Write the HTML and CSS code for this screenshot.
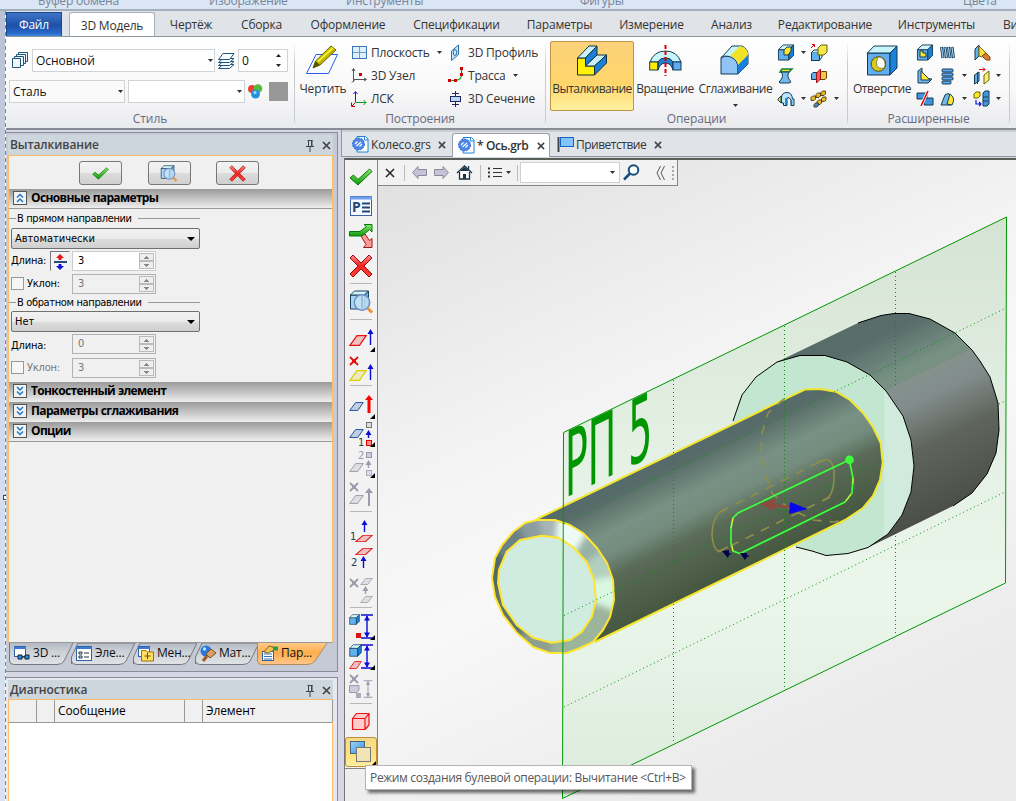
FILE: index.html
```html
<!DOCTYPE html>
<html lang="ru">
<head>
<meta charset="utf-8">
<title>CAD</title>
<link rel="stylesheet" href="styles.css">
</head>
<body>
<svg class="defs" width="0" height="0">
<defs>
<linearGradient id="gGreen" x1="0" y1="0" x2="0" y2="1"><stop offset="0" stop-color="#8bea6c"/><stop offset="1" stop-color="#0b9a0b"/></linearGradient>
<linearGradient id="gRed" x1="0" y1="0" x2="0" y2="1"><stop offset="0" stop-color="#ff8c8c"/><stop offset=".5" stop-color="#f02222"/><stop offset="1" stop-color="#ff4a3c"/></linearGradient>
<linearGradient id="gBlue" x1="0" y1="0" x2="1" y2="1"><stop offset="0" stop-color="#9fd6ff"/><stop offset="1" stop-color="#2f8be0"/></linearGradient>
<linearGradient id="gPencil" x1="0" y1="0" x2="1" y2="1"><stop offset="0" stop-color="#fff600"/><stop offset="1" stop-color="#8a8000"/></linearGradient>
<linearGradient id="gTab" x1="0" y1="0" x2="0" y2="1"><stop offset="0" stop-color="#b4bac4"/><stop offset=".4" stop-color="#ccd1d7"/><stop offset="1" stop-color="#dfe3e6"/></linearGradient>
<linearGradient id="gSel" x1="0" y1="0" x2="0" y2="1"><stop offset="0" stop-color="#ffc989"/><stop offset=".45" stop-color="#ffae4c"/><stop offset="1" stop-color="#ffc78c"/></linearGradient>
</defs>
<symbol id="check" viewBox="0 0 24 18"><path d="M1 10 4.500 7 9 11.500 20.500 1 23 3.500 9 17Z" fill="url(#gGreen)" stroke="#0a7a0a"/></symbol>
<symbol id="cross" viewBox="0 0 24 24"><path d="M4 1 12 9 20 1 23 4 15 12 23 20 20 23 12 15 4 23 1 20 9 12 1 4Z" fill="url(#gRed)" stroke="#a50808"/></symbol>
<symbol id="xs" viewBox="0 0 10 10"><path d="M1 1 9 9M9 1 1 9" stroke="currentColor" stroke-width="1.800"/><path d="M5 3v4M3 5h4" stroke="currentColor" stroke-width="2"/></symbol>
<symbol id="tri" viewBox="0 0 5 5"><path d="M5 0V5H0Z" fill="#000"/></symbol>
<symbol id="down" viewBox="0 0 5 3"><path d="M0 0H5L2.500 3Z" fill="#333"/></symbol>
<symbol id="pin" viewBox="0 0 8 13"><path d="M1.500 1.500H6.500M2.500 1V7M5.500 1V7M0 7.500H8M4 8V13" fill="none" stroke="#444"/><path d="M5 1h1.500v6H5z" fill="#444"/></symbol>
<symbol id="close" viewBox="0 0 9 9"><path d="M1 1 8 8M8 1 1 8" stroke="#444" stroke-width="1.700"/></symbol>
<symbol id="cubemag" viewBox="0 0 24 24"><path d="M1 5H15V19H1Z" fill="#a9d6f0" stroke="#17415c"/><path d="M1 5 5 1H19L15 5Z" fill="#d5f5fc" stroke="#17415c"/><path d="M15 5 19 1V15L15 19Z" fill="#68abd8" stroke="#17415c"/><circle cx="12.500" cy="12.500" r="7.700" fill="#c5e4f6" fill-opacity=".85" stroke="#6f8fc8" stroke-width="1.500"/><path d="M12.500 6V18" stroke="#6f9dc0"/><path d="M18 18 22.500 22.500" stroke="#e8943a" stroke-width="3"/></symbol>
<symbol id="docgear" viewBox="0 0 17 17"><path d="M5 .5H13.500L16 3V16H5Z" fill="#fff" stroke="#1c86d6"/><path d="M12.500 .5V4H16" fill="none" stroke="#1c86d6"/><circle cx="6.500" cy="8" r="6" fill="#4b86e4" stroke="#2d67ce" stroke-dasharray="2 1"/><path d="M3 8 5.500 5.500M10 8 7.500 10.500M4.500 10 9 6" stroke="#fff" stroke-width="1.200"/></symbol>
<symbol id="plane" viewBox="0 0 18 11" preserveAspectRatio="none"><path d="M.9 10.300 8 .7H17.100L10.500 10.300Z" fill="currentColor" fill-opacity=".22" stroke="currentColor" stroke-width="1.200"/></symbol>
<symbol id="box" viewBox="0 0 18 18"><path d="M1 6H12V17H1Z" fill="#63b0ee" stroke="#143b55"/><path d="M1 6 6 1H17L12 6Z" fill="#d2f4fb" stroke="#143b55"/><path d="M12 6 17 1V12L12 17Z" fill="#197fd8" stroke="#143b55"/></symbol>
<symbol id="dims" viewBox="0 0 12 25"><path d="M0 1H12M0 24H12M6 2V23" stroke="currentColor" stroke-width="1.400"/><path d="M6 1.500 9 6.500H3ZM6 23.500 9 18.500H3Z" fill="currentColor"/></symbol>
<symbol id="up" viewBox="0 0 7 17" preserveAspectRatio="xMidYMin slice"><path d="M3.500 0 6.500 5H4.200V30H2.800V5H.5Z" fill="currentColor"/></symbol>
<symbol id="dblDown" viewBox="0 0 14 14"><rect x=".5" y=".5" width="13" height="13" fill="#f2f2f2" stroke="#555"/><path d="M4 3 7 6 10 3M4 7.500 7 10.500 10 7.500" fill="none" stroke="#1b78c8" stroke-width="1.500"/></symbol>
<symbol id="dblUp" viewBox="0 0 14 14"><rect x=".5" y=".5" width="13" height="13" fill="#f2f2f2" stroke="#555"/><path d="M4 6.500 7 3.500 10 6.500M4 11 7 8 10 11" fill="none" stroke="#1b78c8" stroke-width="1.500"/></symbol>
</svg>

<header class="back-strip">
  <span class="b1">Буфер обмена</span><span class="b2">Изображение</span><span class="b3">Инструменты</span><span class="b4">Фигуры</span><span class="b5">Цвета</span>
</header>
<div class="window">
<div class="edge"><i></i></div>
<div class="app">
<nav class="tabs">
  <span class="file">Файл</span><span class="active">3D Модель</span><span>Чертёж</span><span>Сборка</span><span>Оформление</span><span>Спецификации</span><span>Параметры</span><span>Измерение</span><span>Анализ</span><span>Редактирование</span><span>Инструменты</span><span class="cut">Вид</span>
</nav>
<section class="ribbon">
  <div class="group g-style">
    <div class="content">
      <div class="row">
        <svg class="lay" width="17" height="17"><g fill="#f2f9fd" stroke="#1e5578"><path d="M6.500 .5H15.500V9.500H6.500Z"/><path d="M4.500 2.500H13.500V11.500H4.500Z"/><path d="M2.500 4.500H11.500V13.500H2.500Z"/><path d="M.5 6.500H8.500V15.500H.5Z"/></g></svg>
        <div class="combo w183">Основной<svg width="5" height="3"><use href="#down"/></svg></div>
        <svg class="lay2" width="17" height="16"><g fill="#f7fcff" stroke="#1e5578"><path d="M.5 15.500 5 11.500H16L11.500 15.500Z"/><path d="M.5 12.500 5 8.500H16L11.500 12.500Z"/><path d="M.5 9.500 5 5.500H16L11.500 9.500Z"/><path d="M.5 6.500 5 .5H16L11.500 6.500Z"/></g></svg>
        <div class="combo w50">0<svg width="5" height="13"><path d="M0 3 2.500 0 5 3ZM0 10H5L2.500 13Z" fill="#222"/></svg></div>
      </div>
      <div class="row">
        <div class="combo w116">Сталь<svg width="5" height="3"><use href="#down"/></svg></div>
        <div class="combo w116b"><svg width="5" height="3"><use href="#down"/></svg></div>
        <svg class="balls" width="15" height="15"><circle cx="4" cy="5" r="4" fill="#e8452c"/><circle cx="10" cy="4.500" r="4.300" fill="#56bb38"/><circle cx="7.500" cy="10" r="4.500" fill="#2593e0"/><circle cx="7" cy="8.500" r="1.500" fill="#a6dcff"/></svg>
        <div class="swatch"></div>
      </div>
    </div>
    <div class="caption">Стиль</div>
  </div>
  <div class="group g-build">
    <div class="content">
      <div class="big draw"><svg width="36" height="32"><path d="M1.500 28.500 11 9.500H32.500L23.500 28.500Z" fill="#fafdff" stroke="#2d5cf0"/><path d="M8 23 10.500 16 26 1 31 5 15 20Z" fill="url(#gPencil)" stroke="#6b6500"/><path d="M13 16.500 28 3" stroke="#fff83c" stroke-width="1.500"/><path d="M8 23 10.500 16 15 20Z" fill="#5b5400"/></svg><span>Чертить</span></div>
      <div class="list l1">
        <div><svg width="18" height="18"><rect x="1.500" y="2.500" width="14" height="12" fill="#dcefff" stroke="#3d76b0"/><path d="M8.500 3V14M2 8.500H15" stroke="#6f9dcb"/></svg><span>Плоскость</span><svg class="dd" width="5" height="3"><use href="#down"/></svg></div>
        <div><svg width="18" height="18"><path d="M2.500 2V15M2 12.500H15M1 4 2.500 1.500 4 4M13 11 15.500 12.500 13 14M1 15.500 4 12.500" fill="none" stroke="#555"/><rect x="8" y="6" width="3" height="3" fill="#d00000"/></svg><span>3D Узел</span></div>
        <div><svg width="18" height="18"><path d="M4.500 2V12M2.500 4 4.500 1.500 6.500 4" fill="none" stroke="#2020d8"/><path d="M5 12.500H15M12.500 10 15 12.500 12.500 15" fill="none" stroke="#169616"/><path d="M4.500 12.500 1 16M.5 12.500V16.500H4" fill="none" stroke="#d00000"/></svg><span>ЛСК</span></div>
      </div>
      <div class="list l2">
        <div><svg width="18" height="18"><path d="M3.500 7 10.500 1V10.500L3.500 16.500Z" fill="#c8e6fa" stroke="#2d6da3"/><ellipse cx="7" cy="8.500" rx="1.700" ry="3" fill="none" stroke="#2d6da3"/></svg><span>3D Профиль</span></div>
        <div><svg width="18" height="18"><path d="M2 13.500H7Q13.500 13 13.500 8V2" fill="none" stroke="#169616" stroke-width="1.200"/><path d="M0 12h3v3H0zM6 12h3v3H6zM12 6h3v3h-3zM12 0h3v3h-3z" fill="#c80000"/></svg><span>Трасса</span><svg class="dd" width="5" height="3"><use href="#down"/></svg></div>
        <div><svg width="18" height="18"><rect x="2.500" y="6.500" width="10" height="5" fill="#b9d9fa" stroke="#24245c"/><path d="M7.500 1V6M7.500 12V17M4 3.500H11M4 14.500H11" stroke="#24245c"/></svg><span>3D Сечение</span></div>
      </div>
    </div>
    <div class="caption">Построения</div>
  </div>
  <div class="group g-ops">
    <div class="content">
      <div class="big on"><svg width="32" height="32"><g stroke="#14303f"><path d="M1.500 13H9.500V21H18.500V30H1.500Z" fill="#fff200"/><path d="M1.500 13 13 1H21L9.500 13Z" fill="#c8f0fa"/><path d="M9.500 13 21 1V10L9.500 21Z" fill="#197fd8"/><path d="M9.500 21 21 10H30.500L18.500 21Z" fill="#c8f0fa"/><path d="M18.500 21 30.500 10V18L18.500 30Z" fill="#197fd8"/></g></svg><span>Выталкивание</span></div>
      <div class="big rot"><svg width="33" height="32"><path d="M1 17Q5 6 16.500 6T32 17H24Q22 13 16.500 13T9 17Z" fill="#c8f4fc" stroke="#143b55"/><path d="M9 17Q11 13 16.500 13T24 17V25Q22 18 16.500 18T9 25Z" fill="#2580d0" stroke="#143b55"/><rect x=".7" y="17" width="8" height="8" fill="#ffee00" stroke="#143b55"/><rect x="24" y="17" width="8" height="8" fill="#62aaf0" stroke="#143b55"/><path d="M16.500 0V31" stroke="#e00000" stroke-width="2" stroke-dasharray="4 2"/></svg><span>Вращение</span></div>
      <div class="big fil"><svg width="30" height="32"><path d="M1 29V13Q1 11 5 11 17 11 18 21V29Z" fill="#8fc4f4" stroke="#143b55"/><path d="M1 13 12 1H22Q28 4 28 10V19L18 29V21Q16 11 5 11Z" fill="#c8f4f8" stroke="#143b55"/><path d="M10 11 20 1Q28 3 28 10L18 20Q17 13 10 11Z" fill="#f2e424"/><path d="M18 20 28 10V19L18 29Z" fill="#197fd8"/></svg><span>Сглаживание</span><svg class="dd2" width="5" height="3"><use href="#down"/></svg></div>
      <div class="icons i-ops">
        <svg width="18" height="18"><use href="#box" width="18" height="17"/><path d="M7 11V6L10 3H14V7L11 11Z" fill="#ffe82c" stroke="#143b55"/></svg><svg class="dd" width="5" height="3"><use href="#down"/></svg>
        <svg width="18" height="18"><rect x="1.500" y="8.500" width="8" height="8" fill="#63b0ee" stroke="#143b55"/><path d="M1.500 8.500 4 6H12L9.500 8.500M12 6V13L9.500 16.500" fill="#c5eefa" stroke="#143b55"/><path d="M8 4 11 1H17V8L14 11H8Z" fill="#f6e84c" stroke="#6b6500"/><path d="M1 4 4 1M2 .5H4.500V3" fill="none" stroke="#e00000"/></svg><i></i>
        <svg width="18" height="18"><path d="M5 2H15L12 5H3Z" fill="#ffe62e" stroke="#138038" stroke-width="1.500"/><path d="M4 5H12Q9 9 14 15L12 16H3L2 15Q8 9 4 5Z" fill="#74b9ed" stroke="#143b55"/></svg><i></i>
        <svg width="18" height="18"><path d="M1.500 7 3 5.500H7.500V11L6 12.500H1.500Z" fill="#63b0ee" stroke="#143b55"/><path d="M10 6 12 4.500H16.500V11L15 12.500H10Z" fill="#f0c84a" stroke="#6b4500"/><path d="M6.500 6 10.500 2V12L6.500 16Z" fill="#f45b55" stroke="#a01010"/></svg><i></i>
        <svg width="18" height="18"><path d="M4.500 13V7Q5 2.500 10 2.500T15.500 9H17V15.500H14V10Q12 6 10 8V15.500H6.500V13Z" fill="#b8e6fa" stroke="#143b55"/><path d="M1 9 4 6V13L1 10Z" fill="#ffe82c" stroke="#143b55"/><path d="M9 8V15M14.500 10V15" stroke="#1676ca" stroke-width="1.500"/></svg><svg class="dd" width="5" height="3"><use href="#down"/></svg>
        <svg width="18" height="18"><g fill="#e8b92c" stroke="#4c3a00" stroke-width=".9"><path d="M11 2.500 12.500 1H15.500V4L14 5.500H11ZM6 4.500 7.500 3H10.500V6L9 7.500H6ZM1 7.500 2.500 6H5.500V9L4 10.500H1ZM11.500 8.500 13 7H16V10L14.500 11.500H11.500ZM7 11.500 8.500 10H11.500V13L10 14.500H7Z"/><path d="M4 14.500 5.500 13H8.500V15.500L7 17H4Z" fill="#358bd6"/></g></svg><svg class="dd" width="5" height="3"><use href="#down"/></svg>
      </div>
    </div>
    <div class="caption">Операции</div>
  </div>
  <div class="group g-adv">
    <div class="content">
      <div class="big hole"><svg width="32" height="32"><g stroke="#143b55"><path d="M1.500 8H24V30H1.500Z" fill="#62acf0"/><path d="M1.500 8 8 1H31L24 8Z" fill="#c8f4fc"/><path d="M24 8 31 1V23L24 30Z" fill="#1b82dc"/></g><circle cx="12.500" cy="19" r="7.300" fill="#d8cb20" stroke="#555100"/><path d="M12 12A7 7 0 0 1 17.500 23.500Q7 24 12 12Z" fill="#fbfbfb" stroke="#67630a" stroke-width=".7"/></svg><span>Отверстие</span></div>
      <div class="icons i-adv">
        <svg width="18" height="18"><use href="#box" width="18" height="17"/><path d="M4 13V7H7V9H10V13Z" fill="#ffe82c" stroke="#143b55"/></svg>
        <svg width="18" height="18"><g fill="none" stroke="#143b55" stroke-width="3"><path d="M2.500 3 4 14M6 3 7.500 14M9.500 3 11 14M13 3 14.500 14"/></g><g fill="none" stroke="#9fd0f4" stroke-width="1.300"><path d="M2.500 3.500 4 13.500M6 3.500 7.500 13.500M9.500 3.500 11 13.500M13 3.500 14.500 13.500"/></g></svg><i></i>
        <svg width="18" height="18"><path d="M2 5 6 1V12L2 16Z" fill="#63b0ee" stroke="#143b55"/><path d="M6 2 13 9 9 13 6 12Z" fill="#f8e13a" stroke="#8b6a00"/><path d="M9 12 13 9 17 13V16H13Z" fill="#d07c35" stroke="#8c4515"/></svg><i></i>
        <svg width="18" height="18"><path d="M2 4 6 1V11L16 12 12 16H2Z" fill="#74b9ed" stroke="#143b55"/><path d="M5 4 14 13H5Z" fill="#ffe82c" stroke="#143b55"/></svg>
        <svg width="18" height="18"><g fill="#5eaaf0" stroke="#143b55"><rect x="3" y="2" width="11" height="3" rx="1"/><rect x="3" y="6" width="11" height="3" rx="1"/><rect x="3" y="10" width="11" height="3" rx="1"/><rect x="3" y="14" width="9" height="3" rx="1"/></g></svg><svg class="dd" width="5" height="3"><use href="#down"/></svg>
        <svg width="18" height="18"><path d="M1.500 8 6 5V14L1.500 17Z" fill="#68afe5" stroke="#143b55"/><path d="M11 8 16 4V13L11 17Z" fill="#f7ee7c" stroke="#6b6500"/><path d="M4.500 17V5" stroke="#e00000"/><path d="M6 2.500H12M10 .5 12 2.500 10 4.500" fill="none" stroke="#e00000"/></svg><svg class="dd" width="5" height="3"><use href="#down"/></svg>
        <svg width="18" height="18"><path d="M1 3H11V9H1ZM8 8H17V15H8Z" fill="#3f92dc" stroke="#143b55"/><path d="M5 16 12 1" stroke="#fff" stroke-width="3"/><path d="M5 16 12 1" stroke="#e00000" stroke-width="1.500"/></svg>
        <svg width="18" height="18"><path d="M2 15 6 5Q9 2 12 5V15Z" fill="#74b9ed" stroke="#143b55"/><path d="M8 14 11 4Q17 8 13 15Z" fill="#ffe82c" stroke="#143b55"/></svg><svg class="dd" width="5" height="3"><use href="#down"/></svg>
        <svg width="18" height="18"><path d="M1 4 3 2H7V6L5 8H1Z" fill="#ffe82c" stroke="#6b6500"/><path d="M10 3 12 1H16V14L14 16H10ZM10 7H15M10 11H15" fill="#4496dc" stroke="#143b55"/><path d="M3 10V14H8M6 12 8 14 6 16" fill="none" stroke="#1111e0" stroke-width="1.200"/></svg><svg class="dd" width="5" height="3"><use href="#down"/></svg>
      </div>
    </div>
    <div class="caption">Расширенные</div>
  </div>
</section>

<main class="work">
<aside class="left">
  <section class="panel props">
    <div class="phead"><b>Выталкивание</b><svg width="8" height="13"><use href="#pin"/></svg><svg width="9" height="9"><use href="#close"/></svg></div>
    <div class="pbody">
      <div class="acts"><span><svg width="17" height="13"><use href="#check"/></svg></span><span><svg width="18" height="17"><use href="#cubemag"/></svg></span><span><svg width="17" height="17"><use href="#cross"/></svg></span></div>
      <div class="sect line"><svg width="14" height="14"><use href="#dblUp"/></svg>Основные параметры</div>
      <div class="legend"><span>В прямом направлении</span></div>
      <div class="select">Автоматически<svg width="8" height="4"><path d="M0 0H8L4 4Z"/></svg></div>
      <div class="field f1"><label>Длина:</label><span class="dir"><svg width="20" height="20"><path d="M10 3 14 7H11.500V9H8.500V7H6Z" fill="#e11"/><rect x="4" y="10" width="13" height="2" fill="#1f4a7a"/><path d="M10 19 14 15H11.500V13H8.500V15H6Z" fill="#11d"/></svg></span><div class="spin live">3<i></i></div></div>
      <div class="field f2"><em></em><label>Уклон:</label><div class="spin">3<i></i></div></div>
      <div class="legend second"><span>В обратном направлении</span></div>
      <div class="select">Нет<svg width="8" height="4"><path d="M0 0H8L4 4Z"/></svg></div>
      <div class="field f3"><label>Длина:</label><div class="spin">0<i></i></div></div>
      <div class="field f4"><em></em><label>Уклон:</label><div class="spin">3<i></i></div></div>
      <div class="sect"><svg width="14" height="14"><use href="#dblDown"/></svg>Тонкостенный элемент</div>
      <div class="sect"><svg width="14" height="14"><use href="#dblDown"/></svg>Параметры сглаживания</div>
      <div class="sect line"><svg width="14" height="14"><use href="#dblDown"/></svg>Опции</div>
    </div>
    <div class="ptabs">
      <div><svg class="shape" width="65" height="23"><path d="M.5 0V18Q1 21.500 5 21.500H48Q53 21.500 55 18L64 0"/></svg><svg width="17" height="17"><rect x=".5" y="1.500" width="11" height="10" fill="#fff" stroke="#2f62a8"/><path d="M0 3h12" stroke="#3d7bd0" stroke-width="2"/><path d="M4 10h4v4H4zM11 10h4v4h-4z" fill="#3390d8" stroke="#123"/><path d="M8 12h3" stroke="#123"/></svg><span>3D ...</span></div>
      <div><svg class="shape" width="65" height="23"><path d="M.5 21V14L7 0H64L55 18Q53 21.500 48 21.500H5Q1 21.500 .5 18"/></svg><svg width="17" height="17"><rect x=".5" y="1.500" width="15" height="14" fill="#fff" stroke="#2f62a8"/><path d="M0 3h16" stroke="#3d7bd0" stroke-width="2"/><path d="M3 7h3v2H3zM3 11h3v2H3zM8 8h5M8 12h5" fill="none" stroke="#234"/></svg><span>Эле...</span></div>
      <div><svg class="shape" width="65" height="23"><path d="M.5 21V14L7 0H64L55 18Q53 21.500 48 21.500H5Q1 21.500 .5 18"/></svg><svg width="17" height="17"><rect x=".5" y="1.500" width="11" height="10" fill="#fff" stroke="#2f62a8"/><path d="M0 3h12" stroke="#3d7bd0" stroke-width="2"/><path d="M3.500 5.500H8L9 7H15.500V16H3.500Z" fill="#ffdf62" stroke="#a66f00"/><path d="M9.500 8v6M6.500 11h6" stroke="#754800"/></svg><span>Мен...</span></div>
      <div><svg class="shape" width="65" height="23"><path d="M.5 21V14L7 0H64L55 18Q53 21.500 48 21.500H5Q1 21.500 .5 18"/></svg><svg width="17" height="17"><circle cx="6" cy="6" r="5.500" fill="#2879dc"/><circle cx="4.500" cy="4" r="1.700" fill="#b9dcff"/><path d="M3 16 7 11" stroke="#a05a22" stroke-width="3"/><path d="M6 9 11 4 16 8 10 13Z" fill="#d9a069" stroke="#874a1c"/></svg><span>Мат...</span></div>
      <div class="sel"><svg class="shape" width="72" height="23"><path d="M.5 0V18Q1 21.500 5 21.500H50Q55 21.500 58 18L70 0"/></svg><svg width="17" height="17"><rect x=".5" y="6.500" width="11" height="9" fill="#fff" stroke="#2f62a8"/><path d="M2 9h8M2 11.500h8M2 14h8" stroke="#3372b4"/><path d="M2 7 7 1 11 2 12 5 6 8Z" fill="#f2c354" stroke="#8a6511"/><path d="M11 1.500h5v4h-4Z" fill="#2d9a54"/></svg><span>Пар...</span></div>
    </div>
  </section>
  <section class="panel diag">
    <div class="phead"><b>Диагностика</b><svg width="8" height="13"><use href="#pin"/></svg><svg width="9" height="9"><use href="#close"/></svg></div>
    <div class="pbody"><div class="thead"><span></span><span></span><span>Сообщение</span><span></span><span>Элемент</span></div></div>
  </section>
</aside>

<section class="doc">
  <nav class="dtabs">
    <div class="d1"><svg width="17" height="17"><use href="#docgear"/></svg><span>Колесо.grs</span><svg width="8" height="8"><use href="#close"/></svg></div>
    <div class="d2"><svg width="17" height="17"><use href="#docgear"/></svg><b>* Ось.grb</b><svg width="8" height="8"><use href="#close"/></svg></div>
    <div class="d3"><svg width="17" height="17"><path d="M1.500 1V16" stroke="#444" stroke-width="2"/><rect x="3.500" y="1.500" width="13" height="9" fill="#83c5fa" stroke="#1565c0"/></svg><span>Приветствие</span><svg width="8" height="8"><use href="#close"/></svg></div>
  </nav>
  <div class="frame">
    <div class="vbar">
      <svg><use href="#check" x="4" y="7" width="24" height="18"/></svg>
      <svg><rect x="5.500" y="5.500" width="21" height="19" fill="#f5faff" stroke="#3a64a0"/><path d="M5 7h22" stroke="#6e9ff0" stroke-width="3"/><text x="7" y="21" class="pglyph">P</text><path d="M17 12.500h8M17 16.500h8M17 20.500h8" stroke="#24447c" stroke-width="2"/></svg>
      <svg><path d="M16 15 20 13 24.500 19.500 27 17.500V26.500H18.500L21 23.500Z" fill="#ff9a9a" stroke="#9c1c1c"/><path d="M4.500 10.500H15L21.500 5.500 19 3.500H27V11L24.500 8.500 17 15H4.500Z" fill="url(#gGreen)" stroke="#0a7a0a"/></svg>
      <svg><use href="#cross" x="4" y="3" width="24" height="24"/></svg>
      <hr>
      <svg><use href="#cubemag" x="4" y="3" width="25" height="24"/></svg>
      <hr>
      <svg><use href="#plane" class="red" x="4" y="12" width="18" height="11"/><use href="#up" class="blue" x="22" y="6" width="7" height="16"/><use href="#tri" x="25" y="24" width="5" height="5"/></svg>
      <svg><use href="#xs" class="red" x="4" y="3" width="10" height="10"/><use href="#plane" class="yel" x="4" y="17" width="18" height="11"/><use href="#up" class="blue" x="22" y="11" width="7" height="16"/></svg>
      <hr>
      <svg><use href="#plane" class="navy" x="4" y="13" width="15" height="9"/><path d="M24 6 28 11H25.500V24H22.500V11H20Z" fill="#f00"/><use href="#tri" x="25" y="25" width="5" height="5"/></svg>
      <svg><rect x="21.500" y="3.500" width="5" height="5" fill="#ddd" stroke="#777"/><use href="#plane" class="navy" x="4" y="10" width="15" height="9"/><use href="#up" class="blue" x="20" y="11" width="7" height="8"/><text x="13" y="27">1</text><rect x="21.500" y="21.500" width="5" height="5" fill="#f88" stroke="#d00"/><use href="#tri" x="25" y="23" width="5" height="5"/></svg>
      <svg class="off"><text x="13" y="10">2</text><rect x="21.500" y="3.500" width="5" height="5" fill="#ccd" stroke="#99a"/><use href="#plane" x="4" y="14" width="15" height="9"/><use href="#up" x="20" y="11" width="7" height="8"/><rect x="21.500" y="21.500" width="5" height="5" fill="#dde" stroke="#aab"/><use href="#tri" x="25" y="24" width="5" height="5"/></svg>
      <svg class="off"><use href="#xs" x="4" y="3" width="10" height="10"/><use href="#plane" x="4" y="16" width="15" height="9"/><path d="M24 9 28 14H25V27H23V14H20Z" fill="currentColor"/></svg>
      <hr>
      <svg><use href="#up" class="blue" x="16" y="5" width="7" height="12"/><text x="5" y="25">1</text><use href="#plane" class="red" x="10" y="20" width="18" height="7"/></svg>
      <svg><use href="#plane" class="red" x="10" y="3" width="18" height="7"/><text x="6" y="21">2</text><use href="#up" class="blue" x="15" y="11" width="7" height="12"/></svg>
      <svg class="off"><use href="#xs" x="4" y="3" width="10" height="10"/><use href="#plane" x="15" y="3" width="13" height="7"/><use href="#up" x="17" y="11" width="7" height="8"/><use href="#plane" x="15" y="21" width="13" height="7"/></svg>
      <hr>
      <svg><use href="#box" x="4" y="3" width="11" height="11"/><rect x="11" y="22" width="5" height="5" fill="#d11"/><use href="#dims" class="blue" x="16" y="3" width="12" height="25"/><use href="#tri" x="25" y="24" width="5" height="5"/></svg>
      <svg><use href="#box" x="4" y="3" width="13" height="13"/><use href="#plane" class="red" x="4" y="20" width="13" height="8"/><use href="#dims" class="blue" x="16" y="3" width="12" height="25"/><use href="#tri" x="25" y="24" width="5" height="5"/></svg>
      <svg class="off"><use href="#xs" x="4" y="3" width="10" height="10"/><path d="M4.500 14.500H14V19L12 21.500H4.500Z" fill="#ccd" stroke="#99a"/><rect x="11" y="22" width="5" height="5" fill="#aab"/><use href="#dims" x="17" y="9" width="12" height="18"/></svg>
      <hr>
      <svg><path d="M7.500 11.500H20V22.500H7.500ZM7.500 11.500 11.500 6.500H24V18L20 22.500M20 11.500 24 6.500" fill="#ffcaca" stroke="#e11" stroke-width="1.200"/></svg>
      <svg class="lit"><rect x="5.500" y="4.500" width="14" height="12" fill="url(#gBlue)" stroke="#47647c"/><rect x="11.500" y="10.500" width="14" height="14" fill="#f1e5b8" stroke="#777"/><use href="#tri" x="26" y="24" width="5" height="5"/></svg>
    </div>
    <div class="view">
      <div class="hbar">
        <svg class="x" width="10" height="10"><path d="M1 1 9 9M9 1 1 9" stroke="#222" stroke-width="1.500"/></svg><i></i>
        <svg width="15" height="13"><path d="M.5 6.500 6 .5V3.500H14.500V9.500H6V12.500Z" fill="#c6c2d6" stroke="#8c889e"/></svg>
        <svg width="15" height="13"><path d="M14.500 6.500 9 .5V3.500H.5V9.500H9V12.500Z" fill="#c6c2d6" stroke="#8c889e"/></svg>
        <svg width="17" height="15"><path d="M1 8 8.500 1 16 8M3.500 7V14H13.500V7M12.500 1V4" fill="#fff" stroke="#1b3444" stroke-width="1.300"/><path d="M7 9h3v5H7zM8.500 2 4 6h9z" fill="#1b3444"/></svg><i></i>
        <svg class="ls" width="23" height="11"><path d="M5 1.500H14M5 5.500H14M5 9.500H14" stroke="#333"/><path d="M0 .5h2v2H0zM0 4.500h2v2H0zM0 8.500h2v2H0zM18 4h5l-2.500 3z" fill="#333"/></svg><i></i>
        <div class="search"><svg width="5" height="3"><use href="#down"/></svg></div>
        <svg class="mg" width="17" height="17"><circle cx="10.500" cy="6" r="4.800" fill="#fff" stroke="#164d7e" stroke-width="2"/><path d="M7 9.500 1 15.500" stroke="#164d7e" stroke-width="2.500"/></svg>
        <svg class="ch" width="9" height="14"><path d="M4.500 0 1 7 4.500 14M8.500 0 5 7 8.500 14" fill="none" stroke="#555"/></svg>
        <svg class="dots" width="3" height="14"><path d="M1 0V14" stroke="#aaa" stroke-width="2" stroke-dasharray="2 2"/></svg>
      </div>
      <svg class="scene" width="638" height="641" viewBox="378 160 638 641">
        <defs>
          <linearGradient id="sky" x1="0" y1="0" x2=".45" y2="1"><stop offset="0" stop-color="#dfdfdf"/><stop offset=".45" stop-color="#f4f4f4"/><stop offset=".65" stop-color="#f8f8f8"/><stop offset="1" stop-color="#ebebeb"/></linearGradient>
          <linearGradient id="tint" x1="0" y1="0" x2="0" y2="1"><stop offset="0" stop-color="#d5e3d5"/><stop offset=".45" stop-color="#e5f2e5"/><stop offset=".65" stop-color="#eaf6ea"/><stop offset="1" stop-color="#dcebdd"/></linearGradient>
          <linearGradient id="bigBody" gradientUnits="userSpaceOnUse" x1="860" y1="322" x2="949.600" y2="508"><stop offset="0" stop-color="#586c69"/><stop offset=".1" stop-color="#586c69"/><stop offset=".3" stop-color="#769083"/><stop offset=".35" stop-color="#789080"/><stop offset=".355" stop-color="#84928e"/><stop offset=".47" stop-color="#828c8b"/><stop offset=".68" stop-color="#5f655c"/><stop offset="1" stop-color="#4b4f48"/></linearGradient>
          <linearGradient id="rod" gradientUnits="userSpaceOnUse" x1="537" y1="519" x2="596" y2="641"><stop offset="0" stop-color="#54696a"/><stop offset=".1" stop-color="#586d69"/><stop offset=".32" stop-color="#799184"/><stop offset=".47" stop-color="#748c7e"/><stop offset=".62" stop-color="#5a6c57"/><stop offset=".85" stop-color="#4d5f49"/><stop offset="1" stop-color="#465740"/></linearGradient>
          <clipPath id="ring"><path d="M536.700 520 555 520 570 525 583 533 597 548 607 563 613 580 614 600 610 617 603 630 593 642 580 648 567 653 550 653 533 647 517 633 503 615 495 597 492 578 495 558 502 545 513 532 525 523Z"/></clipPath>
          <filter id="soft" x="-20%" y="-20%" width="140%" height="140%"><feGaussianBlur stdDeviation="3"/></filter>
        </defs>
        <rect x="378" y="160" width="638" height="641" fill="url(#sky)"/>
        <path d="M563 432.500 1006.500 217 1005.500 583 562 798.500Z" fill="url(#tint)"/>
        <path d="M777 362 860 322 881 315.500 894 313.500 909 313.500 930 319 955 333 972 350 980 361 990 377 998 403 999 430 996 453 987 474 972 493 953 506 868 547.500Z" fill="url(#bigBody)"/>
        <path d="M733 421 742 395 756 377 777 362 800 355.500 825 355.500 847 362 870 375 886 391 903 416 911 440 914 466 911 492 902 515 888 534 868 547.500 848 553.500 826 555.500 812 551 796 547Z" fill="#c2e6d0"/>
        <path d="M884.500 389.500 886 391 903 416 911 440 914 466 911 492 902 515 888 534 884 537Z" fill="#d0eade"/>
        <g fill="none" stroke="#000"><path d="M858 323 881 315.500 894 313.500 909 313.500 930 319 955 333 972 350 980 361 990 377 998 403 999 430 996 453 987 474 972 493 953 506"/><path d="M733 421 742 395 756 377 777 362 800 355.500 825 355.500 847 362 870 375 886 391 903 416 911 440 914 466 911 492 902 515 888 534 868 547.500 848 553.500 826 555.500 812 551 796 547"/></g>
        <path d="M537 519 790 396.700 805 389.500 820 389 836 391.700 850 400 863 413 873 427 880.700 443 882.700 463 880 480 873 496 863 508 845 520 595 642Z" fill="url(#rod)"/>
        <g clip-path="url(#ring)"><rect x="490" y="515" width="130" height="145" fill="#8fa095"/><g filter="url(#soft)">
          <path d="M552 588 470 590 470 535Z" fill="#53686a"/><path d="M552 588 470 535 505 500Z" fill="#6c8185"/><path d="M552 588 505 500 535 500Z" fill="#8c9da0"/><path d="M552 588 535 500 560 490Z" fill="#a6b5b4"/><path d="M552 588 560 490 605 505Z" fill="#eefcf6"/><path d="M552 588 605 505 630 530Z" fill="#98b3a4"/><path d="M552 588 630 530 645 570Z" fill="#b3cfbd"/><path d="M552 588 645 570 640 620Z" fill="#d8f8e2"/><path d="M552 588 640 620 610 670 550 690Z" fill="#9db49c"/><path d="M552 588 550 690 500 670Z" fill="#8e9f91"/><path d="M552 588 500 670 460 630 470 590Z" fill="#60746e"/></g></g>
        <path d="M541.700 535.700 558 537.700 573 547 586.700 562 594 580 596 600 591.700 617 581.700 632 570 640 551.700 642.700 533 637.700 516.700 625 503 605 498 583 499 570 506.700 551.700 520 540Z" fill="#d0ebdf"/>
        <g fill="none" stroke="#f2e52f" stroke-width="2" stroke-linejoin="round"><path d="M537 519 790 396.700 805 389.500 820 389 836 391.700 850 400 863 413 873 427 880.700 443 882.700 463 880 480 873 496 863 508 845 520 595 642"/><path stroke="#ffe52f" d="M536.700 520 555 520 570 525 583 533 597 548 607 563 613 580 614 600 610 617 603 630 593 642 580 648 567 653 550 653 533 647 517 633 503 615 495 597 492 578 495 558 502 545 513 532 525 523Z"/><path stroke="#ffe52f" d="M541.700 535.700 558 537.700 573 547 586.700 562 594 580 596 600 591.700 617 581.700 632 570 640 551.700 642.700 533 637.700 516.700 625 503 605 498 583 499 570 506.700 551.700 520 540Z"/></g>
        <g fill="none" stroke="#8f8d4a" stroke-width="1.700"><path stroke-dasharray="9 8" d="M784 399 768 413 762 433 761 453 765 473 772 493 787 507 813 520 833 522 845 520M720 512 823 460M830 497 718 552"/><path d="M728 508 720 512Q712 520 712 534 713 551 720 551L728 547M818 462 827 459.500Q835 461 834 480 833 497 824 500"/></g>
        <g fill="none" stroke="#009600"><path d="M563.500 432.500 1006.500 217 1005.500 583 562.500 798.500Z"/><g stroke-dasharray="1 3"><path d="M673.500 380V745M784.500 326V691M895.500 272V385M895.500 536V636M564 523.500 1005 308.600M564 615.500 883 460.500M999 404 1005 401M564 707 1005 492"/></g></g>
        <text class="plane-name" transform="matrix(.43 -.209 0 1 565 498)" textLength="203" lengthAdjust="spacingAndGlyphs">РП 5</text>
        <path d="M849 460 738 513 733 518 731 528 731 543 733 551 740 553.500 845 502 852 493 853 478 851 468Z" fill="none" stroke="#3dff3d" stroke-width="1.700"/>
        <path d="M733 518 731 528M732 546 733 551M853 478V484M851 494 846 501" stroke="#ffe52f"/>
        <circle cx="849.500" cy="459.700" r="4.300" fill="#3dff3d"/>
        <path d="M760 504 775 499 774 511ZM774 504 790 506V508L774 507Z" fill="#8f4a3e"/>
        <path d="M790 502 807.700 509 789 514Z" fill="#0808f0"/>
        <path d="M722 551 729 550 729 553 732 554 729 555 728 558ZM740 553 747 553 747 555 750 556 747 557 745 560Z" fill="#00004c"/>
      </svg>
    </div>
  </div>
</section>
</main>
</div>
</div>
<div class="tooltip">Режим создания булевой операции: Вычитание &lt;Ctrl+B&gt;</div>
</body>
</html>
```

FILE: styles.css
```css
* { box-sizing: border-box; }
body { margin: 0; width: 1016px; height: 801px; overflow: hidden; display: flex; flex-direction: column; font: 12px/16px "Open Sans", "Noto Sans", sans-serif; letter-spacing: -.2px; color: #333; background: #d6d6e4; }
svg { display: block; flex: none; }
.defs { position: absolute; }
.back-strip { height: 11px; flex: none; background: #dbe6f4; border-bottom: 2px solid #a3afbd; display: flex; overflow: hidden; color: #76849a; line-height: 16px; }
.back-strip span { margin-top: -7px; height: 16px; white-space: nowrap; flex: none; }
.b1 { width: 171px; padding-left: 38px; }
.b2 { width: 136px; padding-left: 38px; }
.b3 { width: 234px; padding-left: 39px; }
.b4 { width: 383px; padding-left: 39px; }
.b5 { padding-left: 39px; }
.window { flex: 1; display: flex; min-height: 0; }
.edge { width: 6px; flex: none; background: repeating-linear-gradient(#3d94ea 0 4px, #fff 4px 7px) right / 1px 100% no-repeat, linear-gradient(#b8c2d4, #d0daea 40%, #d8e2f0); padding-top: 484px; }
.edge i { display: block; width: 5px; height: 5px; border: 1px solid #444; background: #fff; margin-left: 3px; }
.app { flex: 1; min-width: 0; display: flex; flex-direction: column; }

.tabs { height: 26px; flex: none; display: grid; grid-template-columns: 56px 7px 86px 72px 69px 104px 113px 93px 91px 69px 118px 105px 27px; background: #e0e3e7; border-bottom: 1px solid #8f979f; overflow: hidden; }
.tabs span { text-align: center; line-height: 28px; white-space: nowrap; }
.tabs .file { background: linear-gradient(#3f75c8, #1d51a8 50%, #2868c8 80%, #4aa0ee); color: #fff; border: 1px solid #1b488f; line-height: 23px; margin-top: 1px; }
.tabs .active { grid-column: 3; background: #fff; border: 1px solid #a8aeb5; border-bottom: 0; border-radius: 3px 3px 0 0; margin-top: 1px; line-height: 25px; height: 26px; }
.tabs .cut { text-align: left; padding-left: 14px; }

.ribbon { height: 93px; flex: none; display: flex; background: linear-gradient(#fff, #f8f8f9 60%, #e9eaed); border-bottom: 2px solid #888d93; }
.group { flex: none; display: flex; flex-direction: column; border-right: 1px solid #d0d3d8; border-image: linear-gradient(#fff 5%, #c8ccd2 30%, #c8ccd2 90%, #fff) 1; }
.content { height: 73px; display: flex; padding-top: 4px; }
.caption { text-align: center; color: #666b80; line-height: 18px; letter-spacing: -.1px; }
.g-style { width: 289px; } .g-build { width: 251px; } .g-ops { width: 302px; } .g-adv { width: 162px; }
.g-style .content { flex-direction: column; padding: 12px 0 0 3px; gap: 8px; }
.row { display: flex; align-items: center; height: 23px; }
.combo { height: 23px; border: 1px solid #cfd3d8; background: #fff; display: flex; align-items: center; justify-content: space-between; padding: 0 2px 0 3px; color: #111; letter-spacing: -.05px; }
.lay { margin: 0 3px; } .lay2 { margin: 0 4px 0 3px; }
.w183 { width: 183px; padding-right: 1px; } .w50 { width: 50px; padding-right: 6px; } .w116 { width: 116px; margin-right: 3px; } .w116b { width: 117px; justify-content: flex-end; }
.row .lay2 + .combo { margin-left: -1px; }
.combo.w116 { background: #fafafa; padding-right: 1px; }
.balls { margin: 0 6px 0 3px; }
.swatch { width: 19px; height: 19px; background: #989898; }
.big { display: flex; flex-direction: column; align-items: center; height: 70px; padding-top: 4px; }
.big span { margin-top: 4px; letter-spacing: -.2px; white-space: nowrap; }
.draw { width: 56px; } .rot { width: 62px; } .fil { width: 78px; } .hole { width: 68px; }
.rot span { letter-spacing: -.45px; } .fil span, .hole span { letter-spacing: -.4px; }
.big.fil span { margin-left: 1px; }
.dd2 { margin-top: 7px; }
.on { width: 84px; margin-left: 4px; background: linear-gradient(#fbd27a, #ffd56b 60%, #fff19e); border: 1px solid #c09348; border-radius: 2px; padding-top: 3px; }
.on span { letter-spacing: -.5px; }
.list { display: flex; flex-direction: column; }
.list div { display: flex; align-items: center; height: 23px; white-space: nowrap; }
.list div > svg:first-child { margin-right: 2px; }
.l1 { width: 97px; } .l2 { width: 92px; }
.dd { margin-left: 7px; }
.icons { display: grid; grid-auto-rows: 23px; align-items: center; }
.icons .dd { margin: 0 0 0 5px; }
.i-ops { grid-template-columns: 19px 14px 19px 14px; margin-left: 3px; }
.i-adv { grid-template-columns: 23px 18px 16px 18px 14px; }

.work { flex: 1; display: flex; min-height: 0; }
.left { width: 332px; flex: none; padding-top: 2px; display: flex; flex-direction: column; gap: 5px; }
.panel { border: 1px solid #868c98; border-left: 0; background: #e5e9ee; padding: 2px 4px 0 2px; display: flex; flex-direction: column; }
.props { height: 540px; background: #c6cad5; }
.diag { flex: 1; border-bottom: 0; }
.phead { height: 20px; flex: none; display: flex; align-items: center; background: #cdd5dd; padding: 0 2px; gap: 8px; line-height: 22px; }
.phead b { flex: 1; font-weight: 600; color: #444; letter-spacing: -.1px; }
.pbody { border: 1px solid #ffbd69; background: #f0f0f0; font: 11px/14px "DejaVu Sans Condensed", "DejaVu Sans", sans-serif; font-stretch: condensed; letter-spacing: -.2px; color: #000; }
.props .pbody { height: 488px; border-bottom-color: #999; }
.acts { height: 33px; padding: 5px 0 0 70px; display: flex; gap: 25.5px; }
.acts span { width: 43px; height: 24px; border: 1px solid #777; border-radius: 3px; background: linear-gradient(#f3f3f3, #ececec 50%, #dcdcdc 51%, #d0d0d0); display: flex; align-items: center; justify-content: center; }
.sect { height: 20px; background: linear-gradient(#9a9a9a, #eee); font: bold 12px/18px "Open Sans", "Noto Sans", sans-serif; letter-spacing: -.65px; word-spacing: .5px; display: flex; align-items: center; gap: 4px; padding: 0 0 2px 4px; }
.sect.line { border-bottom: 1px solid #999; padding-bottom: 1px; }
.legend { width: 191px; height: 19px; display: flex; align-items: center; gap: 6px; letter-spacing: -.35px; }
.legend::before { content: ""; width: 7px; height: 1px; background: #999; margin-right: -5px; }
.legend::after { content: ""; flex: 1; height: 1px; background: #999; }
.legend.second { height: 17px; }
.select { width: 189px; height: 21px; margin-left: 2px; border: 1px solid #707070; border-radius: 2px; background: linear-gradient(#f2f2f2, #ebebeb 50%, #dddddd 51%, #cfcfcf); display: flex; align-items: center; justify-content: space-between; padding: 0 4px 0 3px; letter-spacing: 0; }
.field { height: 20px; display: flex; align-items: center; margin: 2px 0 3px 2px; width: 145px; }
.f2 { margin-top: 0; margin-bottom: 0; }
.f3 { margin-bottom: 4px; } .f3 label { padding-top: 4px; }
.f4 { margin: 0 0 4px 2px; } .f4 label { color: #777; }
.field em { width: 13px; height: 13px; border: 1px solid #999; background: #f6f6f6; margin: 0 3px 2px 0; }
.dir { width: 20px; height: 20px; border: 1px solid #777; border-right-color: #eee; border-bottom-color: #eee; background: #f4f4f8; margin-left: 4px; overflow: hidden; }
.dir svg { margin: -1px; }
.spin { width: 84px; height: 20px; margin-left: auto; border: 1px solid #b2b2b2; color: #777; padding: 1px 1px 1px 5px; display: flex; justify-content: space-between; align-items: center; }
.spin.live { background: #fff; color: #000; border-color: #ccc; }
.spin i { width: 15px; height: 16px; border: 1px solid #bbb; background: conic-gradient(from 135deg at 50% 0, #888 90deg, transparent 0) center 2px / 5px 3px no-repeat, conic-gradient(from 135deg at 50% 0, #888 90deg, transparent 0) center 2px / 5px 3px no-repeat, conic-gradient(from -45deg at 50% 3px, #888 90deg, transparent 0) center 10px / 5px 3px no-repeat, linear-gradient(#eee 6px, #bbb 6px, #bbb 8px, #eee 8px); }

.ptabs { display: flex; height: 22px; padding-left: 1px; }
.ptabs > div { width: 62px; height: 22px; display: flex; align-items: center; position: relative; padding: 0 0 2px 5px; gap: 2px; white-space: nowrap; color: #111; flex: none; }
.ptabs .sel { width: 72px; }
.ptabs .shape { position: absolute; left: 0; top: 0; }
.shape path { fill: url(#gTab); stroke: #75797f; }
.sel .shape path { fill: url(#gSel); stroke: #b48a55; }
.ptabs svg:not(.shape), .ptabs span { position: relative; }
.diag .pbody { flex: 1; background: #fff; border-bottom: 0; margin-top: -1px; }
.thead { display: grid; grid-template-columns: 28px 18px 130px 18px 130px; height: 23px; background: #f0f0f0; border-bottom: 1px solid #999; font: 12px/21px "Open Sans", sans-serif; letter-spacing: -.1px; }
.thead span { border-right: 1px solid #999; padding-left: 3px; }

.doc { flex: 1; min-width: 0; margin-left: 3px; display: flex; flex-direction: column; }
.dtabs { height: 27px; flex: none; display: flex; align-items: flex-end; background: linear-gradient(#c8cdd6 2px, #e0e4e9 2px); border-bottom: 1px solid #8f969f; border-left: 1px solid #8f969f; }
.dtabs div { height: 23px; display: flex; align-items: center; white-space: nowrap; }
.dtabs span { letter-spacing: -.15px; }
.d1 { width: 110px; padding: 0 6px 0 10px; gap: 2px; }
.dtabs div svg:last-child { margin-left: auto; }
.d2 { width: 98px; padding: 0 4px 0 5px; gap: 2px; background: #fff; border: 1px solid #9aa0a8; border-bottom: 0; border-radius: 3px 3px 0 0; }
.dtabs .d2 { height: 24px; margin-bottom: -1px; }
.d2 b { font-weight: 600; letter-spacing: -.4px; }
.d3 { width: 112px; padding-left: 7px; gap: 2px; }
.dtabs .d3 span { letter-spacing: -.5px; }
.frame { flex: 1; min-height: 0; margin-top: 1px; border: 1px solid #777; border-width: 2px 0 0 1px; margin-left: 3px; display: flex; background: #eee; border-top-color: #596057; }
.vbar { width: 33px; height: 609px; flex: none; background: #f2f2f2; border: 1px solid #858585; border-width: 0 1px 1px 0; padding-top: 1px; }
.vbar svg { width: 32px; height: 30px; }
.vbar hr { width: 22px; height: 1px; border: 0; margin: 2px 0 3px 5px; background: #b8b8b8; }
.vbar text { font: 10px "DejaVu Sans", sans-serif; fill: #23415c; }
.vbar .pglyph { font: bold 14px "Noto Sans", sans-serif; fill: #24447c; }
.red { color: #e81010; } .blue { color: #0c0cd8; } .yel { color: #d8d000; } .navy { color: #1d53a0; }
.off { color: #9b9bac; } .vbar .off text { fill: #9b9bac; }
.vbar .lit { background: linear-gradient(#f6d98c, #ffe27a 60%, #fff1a8); border-radius: 3px; outline: 1px solid #b98f3d; outline-offset: -1px; }
.view { flex: 1; min-width: 0; display: grid; overflow: hidden; }
.view > * { grid-area: 1 / 1; }
.hbar { z-index: 1; width: 300px; height: 26px; background: #f2f2f2; border: 1px solid #858585; border-width: 0 1px 1px 0; display: flex; align-items: center; padding-left: 7px; gap: 7px; }
.hbar i { width: 1px; height: 16px; background: #bbb; }
.hbar .x { margin-right: 2px; }
.hbar .ls { margin-right: -1px; }
.search { width: 100px; height: 21px; margin-left: -5px; border: 1px solid #d0d0d0; background: #fff; display: flex; align-items: center; justify-content: flex-end; padding-right: 4px; }
.mg { margin-left: -4px; } .ch { margin-left: 9px; }
.plane-name { font: 90px "DejaVu Sans", sans-serif; fill: #009600; letter-spacing: 0; }
.tooltip { position: absolute; left: 365px; top: 765px; width: 327px; height: 25px; border: 1px solid #b4b4b4; background: #fff; box-shadow: 3px 3px 3px rgba(0,0,0,.55); color: #575757; line-height: 24px; padding-left: 4px; white-space: nowrap; letter-spacing: -.34px; }
```
